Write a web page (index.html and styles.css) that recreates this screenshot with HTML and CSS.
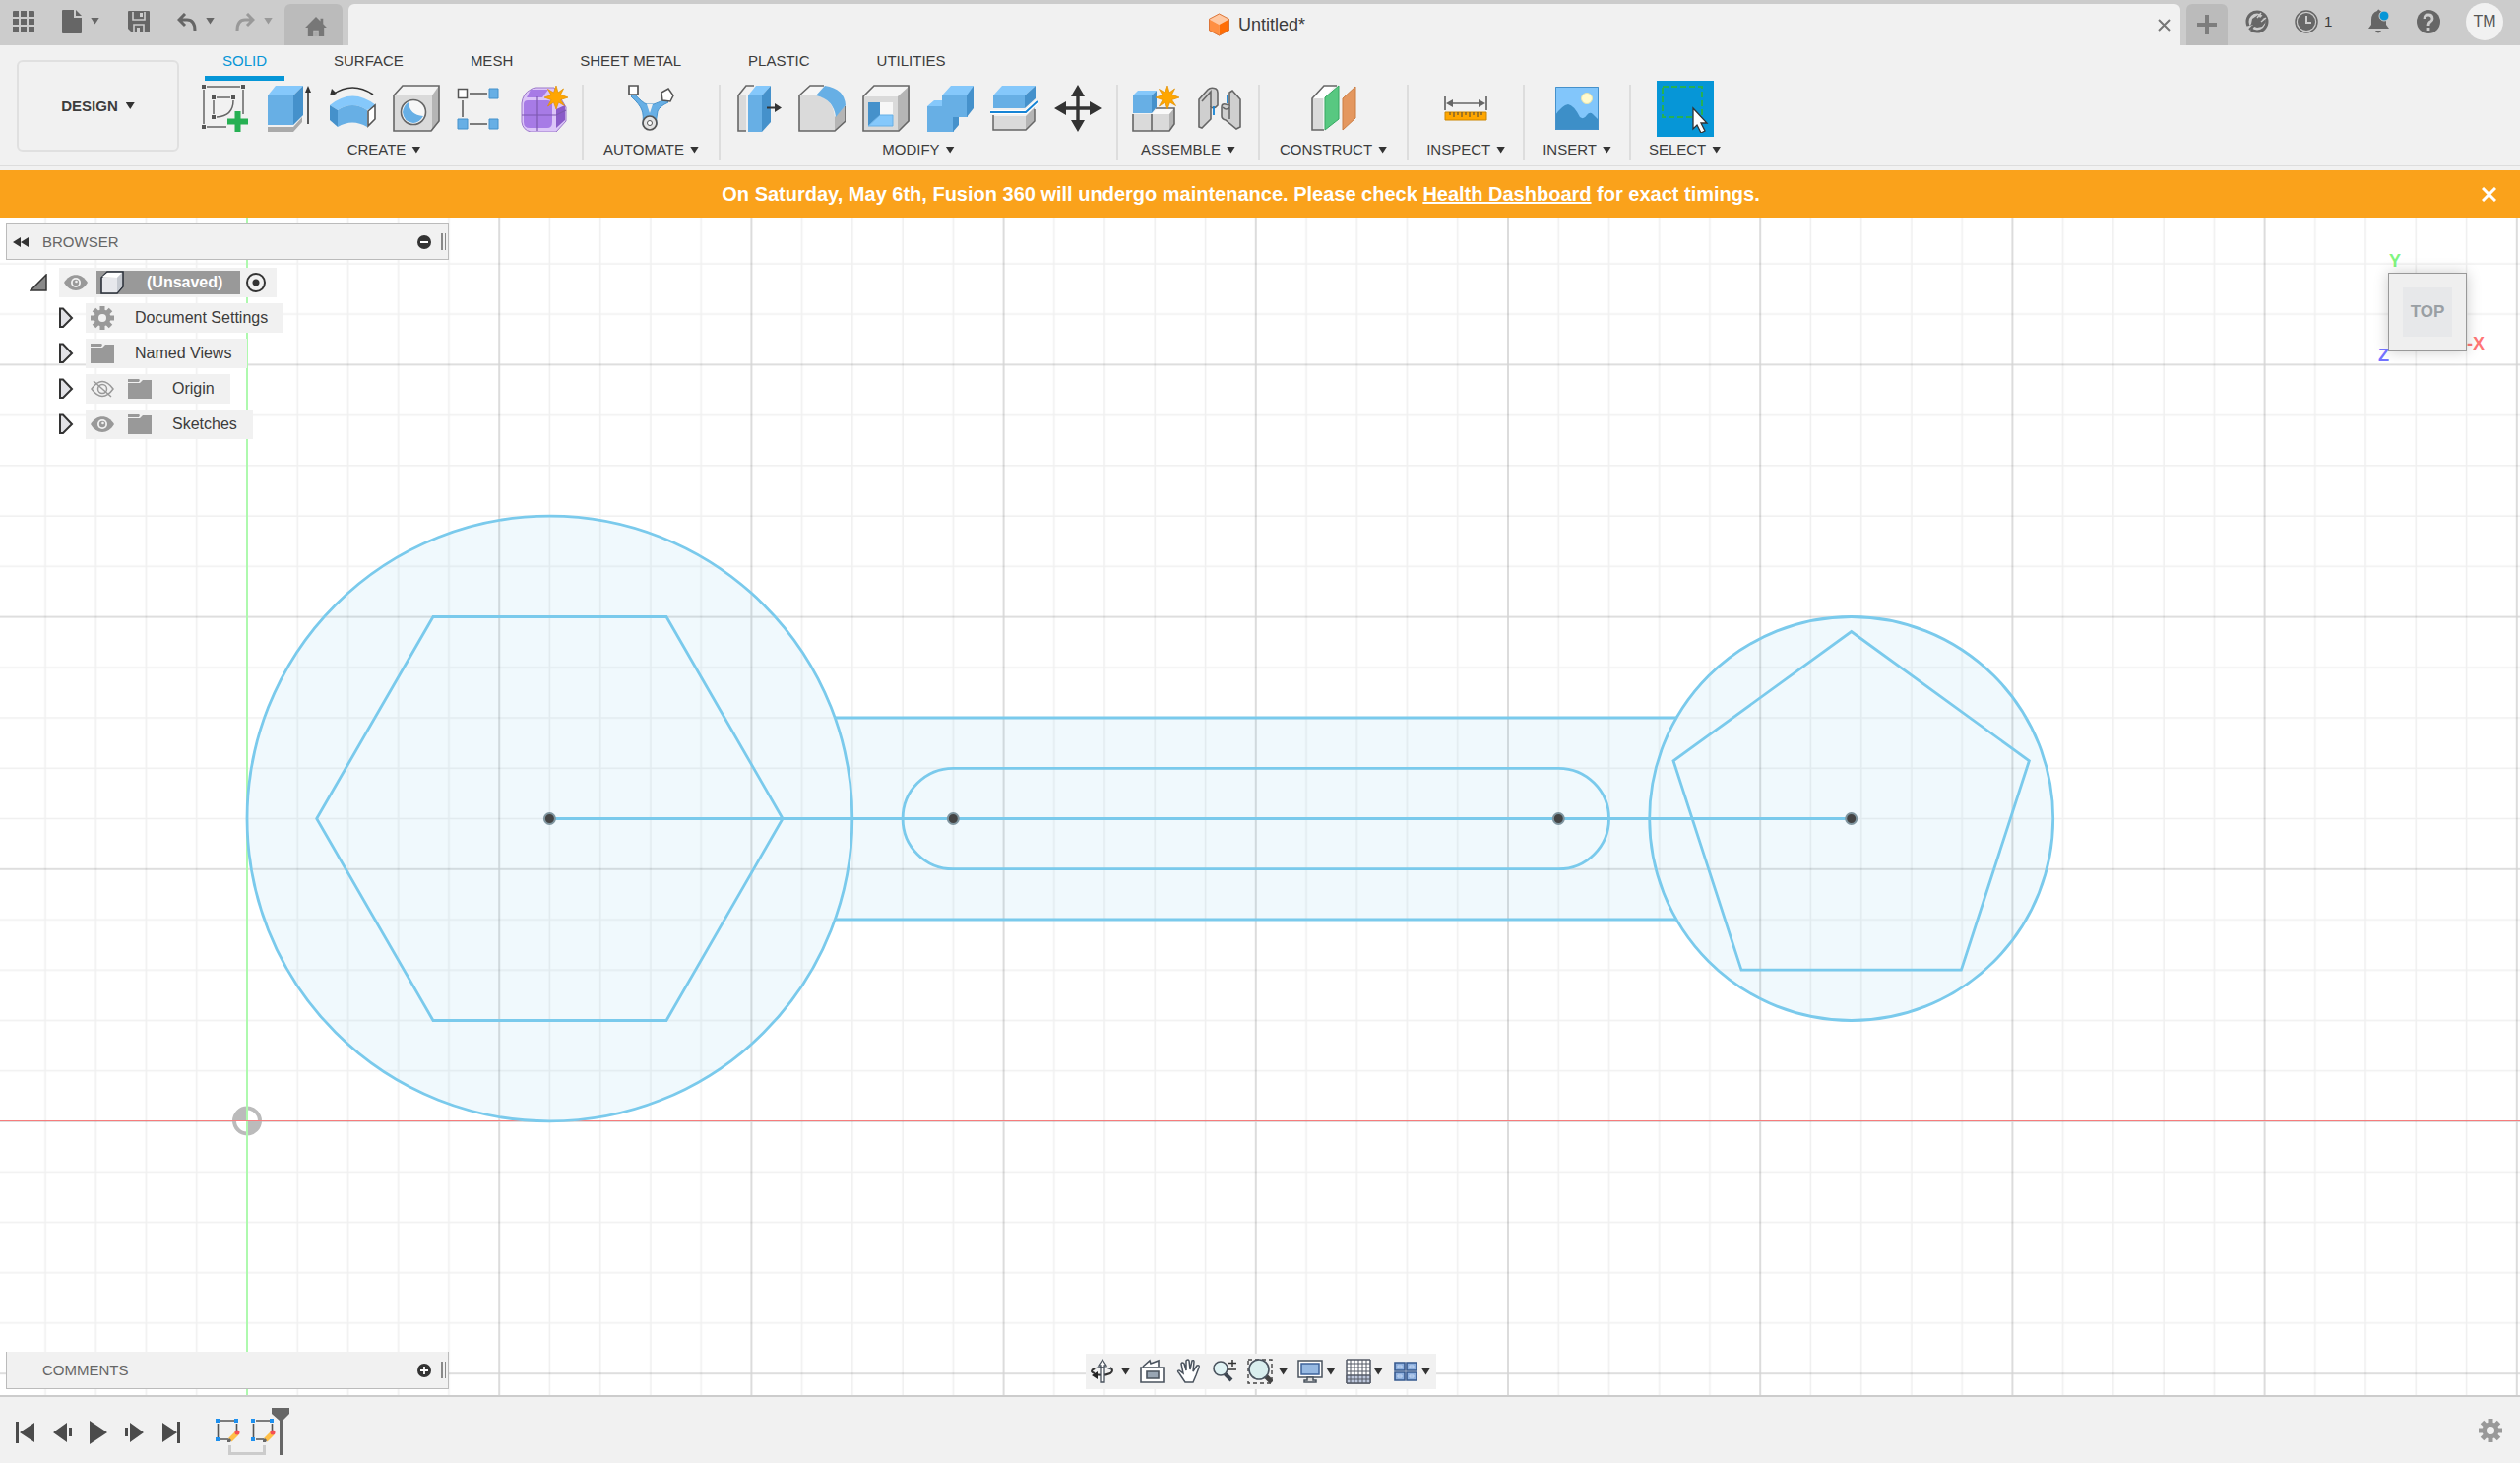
FILE: index.html
```html
<!DOCTYPE html>
<html lang="en">
<head>
<meta charset="utf-8">
<title>Untitled*</title>
<link rel="stylesheet" href="styles.css">
</head>
<body>
<svg class="defs" aria-hidden="true">
  <defs>
    <symbol id="star" viewBox="0 0 24 24"><path fill="#ffa600" stroke="#e08e00" stroke-width=".7" d="M12 0l2 7 5.500-4-3 6L24 12l-7.500 2.500 4 6-6-3.500L12 24l-2.500-7-6 4 3.500-6.500L0 12l7-2.500-3.500-6L9.500 7z"/></symbol>
    <symbol id="folder" viewBox="0 0 24 20"><path fill="#999" d="M0 4h12l3-3h9v19H0z"/><path fill="#999" d="M0 0h11l1 1-1 2H0z"/><path stroke="#f1f1f1" d="M0 3.500h11.500l3-3"  fill="none"/></symbol>
    <symbol id="eye" viewBox="0 0 24 16"><path fill="#999" d="M0 8C6-2.500 18-2.500 24 8 18 18.500 6 18.500 0 8z"/><circle cx="12" cy="8" r="5" fill="#f1f1f1"/><circle cx="12" cy="8" r="3.200" fill="#999"/><circle cx="12.500" cy="7" r="1.300" fill="#f1f1f1"/></symbol>
    <symbol id="gear" viewBox="0 0 24 24"><g fill="#999"><circle cx="12" cy="12" r="8.500"/><path d="M9.500 0h5v24h-5zM0 9.500h24v5H0z"/><path d="M9.500 0h5v24h-5zM0 9.500h24v5H0z" transform="rotate(45 12 12)"/></g><circle cx="12" cy="12" r="4" fill="#f1f1f1"/></symbol>
    <symbol id="expand" viewBox="0 0 16 22"><path d="M2 1.500h3L14 11l-9 9H2z" fill="#e2e2e6" stroke="#333" stroke-width="2"/></symbol>
    <symbol id="sketch" viewBox="0 0 26 26"><path d="M5 3h14M2.500 6v14M21.500 6v8M5 22h8" stroke="#555" stroke-width="1.600"/><g fill="#1e90ee"><path d="M0 1h4v4H0zM19 1h4v4h-4zM0 20h4v4H0z"/></g><path d="M13 21l7-7 3.500 3.500-7 7z" fill="#ffbf47"/><path d="M12 23l2-2 2 2-1 2h-3z" fill="#666"/><circle cx="22" cy="15" r="2.500" fill="#f44f55"/></symbol>
    <pattern id="grid" x="251" y="918" width="256.200" height="256.200" patternUnits="userSpaceOnUse">
      <path d="M51.240 0v257M102.480 0v257M153.720 0v257M204.960 0v257M0 51.240h257M0 102.480h257M0 153.720h257M0 204.960h257" stroke="#000" stroke-opacity=".06" stroke-width="1.500"/>
      <path d="M0 0h257M0 0v257M0 256.200h257M256.200 0v257" stroke="#000" stroke-opacity=".17" stroke-width="1.600"/>
    </pattern>
  </defs>
</svg>

<header class="titlebar">
  <div class="quick">
    <button class="tool apps" aria-label="Apps"><svg width="22" height="22" fill="#666"><path d="M0 1q0-1 1-1h5v6H0zM8 0h6v6H8zM16 0h5q1 0 1 1v5h-6zM0 8h6v6H0zM8 8h6v6H8zM16 8h6v6h-6zM0 16h6v6H1q-1 0-1-1zM8 16h6v6H8zM16 16h6v5q0 1-1 1h-5z"/></svg></button>
    <button class="tool file" aria-label="File"><svg width="20" height="24" fill="#666"><path d="M1 0h11v8h8v15q0 1-1 1H1q-1 0-1-1V1q0-1 1-1z"/><path d="M14 0l6 6h-6z"/></svg><i class="caret"></i></button>
    <button class="tool save" aria-label="Save"><svg width="22" height="22"><path fill="#666" d="M1 0h20q1 0 1 1v20q0 1-1 1H4l-4-4V1q0-1 1-1z"/><path d="M5 1v8h12V1M6 21v-7h10v7" fill="none" stroke="#ccc" stroke-width="1.600"/><path fill="#ccc" d="M12 2h3v4h-3zM9 17h3v4H9z"/></svg></button>
    <button class="tool undo" aria-label="Undo"><svg width="20" height="19" fill="none" stroke="#666" stroke-width="3"><path d="M8 1L2 7l6 6M2 7h8q8 0 8 11"/></svg><i class="caret"></i></button>
    <button class="tool redo" aria-label="Redo" disabled><svg width="20" height="19" fill="none" stroke="#999" stroke-width="3"><path d="M12 1l6 6-6 6M18 7h-8q-8 0-8 11"/></svg><i class="caret"></i></button>
  </div>
  <button class="home" aria-label="Home"><svg width="22" height="20" viewBox="0 0 24 22" fill="#777"><path d="M12 0l5 5V2h3v6l4 4h-3v10h-6v-7H9v7H3V12H0z"/><path d="M10 16h4v6h-4z" fill="#aaa"/></svg></button>
  <div class="doc">
    <div class="doc-name"><svg width="21" height="24" viewBox="0 0 22 24"><path d="M11 0l11 6-11 6L0 6z" fill="#ffc9a3"/><path d="M0 6l11 6v12L0 18z" fill="#ff8f42"/><path d="M22 6l-11 6v12l11-6z" fill="#ff6d05"/><path d="M11 .5L21.500 6v12L11 23.500.5 18V6z" fill="none" stroke="#d97338"/></svg><span>Untitled*</span></div>
    <button class="plain" aria-label="Close document"><svg width="13" height="13" stroke="#777" stroke-width="2"><path d="M1 1l11 11M12 1L1 12"/></svg></button>
  </div>
  <button class="newtab" aria-label="New tab"><svg width="20" height="20" stroke="#7d7d7d" stroke-width="4"><path d="M10 0v20M0 10h20"/></svg></button>
  <div class="status">
    <button class="plain" aria-label="Extensions"><svg width="24" height="24"><circle cx="12" cy="12" r="10" fill="none" stroke="#666" stroke-width="3"/><path fill="#666" d="M7 9l6-4 2 3 3-3 2 2-3 3 3-1 1 3-4 5-5 1-3-1-3 4-3-3 3-4z"/><path d="M16 3l-4 5M21 8l-5 4" stroke="#ccc" stroke-width="1.500"/><path d="M0 17l8-2-4 8z" fill="#ccc"/><path d="M4 20l4-4" stroke="#666" stroke-width="2"/></svg></button>
    <button class="plain jobs" aria-label="Job status"><svg width="24" height="24"><circle cx="12" cy="12" r="11" fill="none" stroke="#666" stroke-width="1.500"/><circle cx="12" cy="12" r="9" fill="#666"/><path d="M12 6v7h5" fill="none" stroke="#ccc" stroke-width="2"/></svg><span>1</span></button>
    <button class="plain" aria-label="Notifications"><svg width="24" height="26"><path fill="#666" d="M10 2q1-3 3 0 6 2 6 9v5l3 4H1l3-4v-5q0-7 6-9zM8 22h6q-3 5-6 0z"/><circle cx="17" cy="7" r="5" fill="#0696d7" stroke="#ccc"/></svg></button>
    <button class="plain" aria-label="Help"><svg width="24" height="24"><circle cx="12" cy="12" r="12" fill="#666"/><path d="M8 9q0-4 4-4t4 4q0 2-2 3t-2 4M12 18v3" fill="none" stroke="#ccc" stroke-width="2.800"/></svg></button>
    <button class="avatar">TM</button>
  </div>
</header>

<section class="ribbon">
  <button class="workspace">DESIGN <i class="caret"></i></button>
  <div class="ribbon-main">
    <nav class="tabs">
      <button class="tab active">SOLID</button><button class="tab">SURFACE</button><button class="tab">MESH</button><button class="tab">SHEET METAL</button><button class="tab">PLASTIC</button><button class="tab">UTILITIES</button>
    </nav>
    <div class="groups">
      <div class="group">
        <div class="icons">
          <button aria-label="Create sketch"><svg viewBox="0 0 48 48"><path d="M6 2h34M3 5v35M43 5v25M6 43h20M16 13h14M13 16v14M33 16q0 16-17 17" fill="none" stroke="#666" stroke-width="1.500"/><path fill="#555" d="M1 0h4v4H1zM41 0h4v4h-4zM1 41h4v4H1zM11 11h4v4h-4zM31 11h4v4h-4zM11 31h4v4h-4z"/><path fill="#26b053" d="M34.500 27h6v7.500H48v6h-7.500V48h-6v-7.500H27v-6h7.500z"/></svg></button>
          <button aria-label="Extrude"><svg viewBox="0 0 48 48"><path d="M3 43h26l9-10v5l-9 10H3z" fill="#aaa"/><path d="M3 11h26v30H3z" fill="#67afe5"/><path d="M3 11L11 1h28L29 11z" fill="#85c8fb"/><path d="M39 1v30L29 41V11z" fill="#4591cb"/><path d="M44 40V6" stroke="#333" stroke-width="1.600"/><path d="M41 8l3-7 3 7z" fill="#333"/></svg></button>
          <button aria-label="Revolve"><svg viewBox="0 0 48 48"><path d="M4 10Q24-4 45 10" fill="none" stroke="#333" stroke-width="1.700"/><path d="M1 11l2-7 5 5z" fill="#333"/><path d="M1 21q23-19 47 0l-9 5q-15-10-30 0z" fill="#85c8fb"/><path d="M9 26q15-10 30 0v17q-15-9-30 0z" fill="#67afe5"/><path d="M1 21l8 5v17l-8-7z" fill="#4591cb"/><path d="M40 27l7-6v14l-7 7z" fill="#fff" stroke="#555" stroke-width="1.600"/></svg></button>
          <button aria-label="Hole"><svg viewBox="0 0 48 48"><path d="M1 11h39v36H1z" fill="#dadada"/><path d="M1 11l9-10h37l-7 10z" fill="#f4f4f4"/><path d="M40 11l7-10v36l-7 10z" fill="#b5b5b5"/><path d="M1 11l9-10h37v36l-8 10H1z" fill="none" stroke="#666" stroke-width="1.600"/><circle cx="21" cy="28" r="12.500" fill="#f7f7f7" stroke="#666" stroke-width="1.600"/><path d="M16 18q1 13 15 14-4 7-10 7-10-1-11-11 1-7 6-10z" fill="#67afe5"/></svg></button>
          <button aria-label="Pattern"><svg viewBox="0 0 48 48"><path d="M13 9h18M6 16v17M13 40h18" stroke="#555" stroke-width="1.500"/><path d="M1.500 4.500h9v9h-9z" fill="#fff" stroke="#555" stroke-width="1.500"/><g fill="#67afe5" stroke="#4591cb"><path d="M33 4h9v10h-9zM1 35h10v10H1zM33 35h9v10h-9z"/></g></svg></button>
          <button aria-label="Create form"><svg viewBox="0 0 48 48"><path d="M10 5q2-2 6-2h18l12 20v14l-10 11H10q-8-2-9-10V19Q2 9 10 5z" fill="#dcc5f8" stroke="#9a77c9"/><path d="M10 5h18l-6 8H6zM3 20q0-4 4-4h20q5 0 5 5v17q0 6-5 6H9q-6 0-6-6z" fill="#a77be6"/><path d="M36 25l9-4v15l-9 8z" fill="#8a5bc8"/><path d="M17 12v35M1 31h35l10-5" fill="none" stroke="#7d59af" stroke-width="1.200"/><use href="#star" x="24" y="1" width="24" height="24"/></svg></button>
        </div>
        <button class="label">CREATE <i class="caret"></i></button>
      </div>
      <div class="group">
        <div class="icons">
          <button aria-label="Automated modeling"><svg viewBox="0 0 48 48"><path d="M7 9q9 10 13 11h7q7-2 11-6l4 4q-9 4-11 9-2 9-1 14H16q1-10-1-15Q13 20 4 12z" fill="#67afe5" stroke="#4591cb"/><path d="M20 20h6l-3 9z" fill="#f1f1f1"/><path d="M2 1h9v9H2z" fill="#fff" stroke="#555" stroke-width="1.700"/><path d="M42 4l5 7-3 6-8-1-1-8z" fill="#fff" stroke="#555" stroke-width="1.500"/><circle cx="23" cy="39" r="7" fill="#e4e4e4" stroke="#555" stroke-width="1.700"/><circle cx="23" cy="39" r="2.500" fill="#fff" stroke="#555"/></svg></button>
        </div>
        <button class="label">AUTOMATE <i class="caret"></i></button>
      </div>
      <div class="group">
        <div class="icons">
          <button aria-label="Press pull"><svg viewBox="0 0 48 48"><path d="M4 11h8v36H4z" fill="#dadada"/><path d="M20 1h-8L4 11v36h8" fill="none" stroke="#666" stroke-width="1.600"/><path d="M14 11h14v37H14z" fill="#67afe5"/><path d="M14 11l8-10h15l-9 10z" fill="#85c8fb"/><path d="M37 1v37L28 48V11z" fill="#4591cb"/><path d="M33 23.500h9" stroke="#333" stroke-width="2"/><path d="M41 19l7 4.500-7 4.500z" fill="#333"/></svg></button>
          <button aria-label="Fillet"><svg viewBox="0 0 48 48"><path d="M1 11h16q18 2 20 22v14H1z" fill="#dadada"/><path d="M1 11L12 1h14l-8 10z" fill="#f6f6f6"/><path d="M37 33l11-12v16L37 47z" fill="#b5b5b5"/><path d="M26 1H12L1 11v36h36l11-10V22" fill="none" stroke="#666" stroke-width="1.600"/><path d="M18 11l9-10q20 3 21 20L38 33Q36 15 18 11z" fill="#67afe5"/></svg></button>
          <button aria-label="Shell"><svg viewBox="0 0 48 48"><path d="M1 12h35v35H1z" fill="#dadada"/><path d="M1 12L12 1h36L36 12z" fill="#f5f5f5"/><path d="M48 1v36L36 47V12z" fill="#b5b5b5"/><path d="M1 12L12 1h35v36L37 47H1z" fill="none" stroke="#666" stroke-width="1.600"/><path d="M6 18h25v24H6z" fill="#f7f7f7"/><path d="M6 18h12v13L6 42z" fill="#4591cb"/><path d="M18 31h13v11H6z" fill="#85c8fb" stroke="#67afe5"/></svg></button>
          <button aria-label="Combine"><svg viewBox="0 0 48 48"><path d="M1 22h15V11h26v22H28v15H1z" fill="#67afe5"/><path d="M1 22l7-6h8v6zM16 11L25 1h23l-6 10z" fill="#85c8fb"/><path d="M48 1v23l-7 9V11zM33 33v8l-6 7V33z" fill="#4591cb"/></svg></button>
          <button aria-label="Split body"><svg viewBox="0 0 48 48"><path d="M3 11h32v13H3z" fill="#67afe5"/><path d="M3 11L12 1h34L35 11z" fill="#85c8fb"/><path d="M46 1v13L35 24V11z" fill="#4591cb"/><path d="M3 32h33v14H3z" fill="#dadada"/><path d="M36 32l9-9v14l-9 9z" fill="#b5b5b5"/><path d="M3 31v15h33l9-9V25" fill="none" stroke="#666" stroke-width="1.500"/><path d="M0 28h36l12-11" fill="none" stroke="#fff" stroke-width="4"/><path d="M0 28h36l12-11" fill="none" stroke="#1684d5" stroke-width="2"/></svg></button>
          <button aria-label="Move"><svg viewBox="0 0 48 48"><path d="M24 8v32M8 24h32" stroke="#333" stroke-width="3.400"/><path fill="#333" d="M24 0l7 12H17zM24 48l7-12H17zM0 24l12-7v14zM48 24l-12-7v14z"/></svg></button>
        </div>
        <button class="label">MODIFY <i class="caret"></i></button>
      </div>
      <div class="group">
        <div class="icons">
          <button aria-label="New component"><svg viewBox="0 0 48 48"><path d="M1 30h37v17H1z" fill="#dadada"/><path d="M20 30l6-6h17l-5 6z" fill="#fafafa"/><path d="M43 24v16l-5 7V30z" fill="#b5b5b5"/><path d="M1 30v17h37l5-7V24H24M20 30v17" fill="none" stroke="#666" stroke-width="1.600"/><path d="M1 11h19v18H1z" fill="#67afe5"/><path d="M1 11l5-5h19l-5 5z" fill="#85c8fb"/><path d="M25 6v17l-5 6V11z" fill="#4591cb"/><use href="#star" x="24" y="1" width="24" height="24"/></svg></button>
          <button aria-label="Joint"><svg viewBox="0 0 48 48"><g stroke="#666" stroke-width="1.600"><path d="M3 15l9-10q3-3 8-1 2 1 2 4v13q-3 4-7 2v12l-9 9-3-1z" fill="#cfcfcf"/><path d="M6 17l9-10v16" fill="none"/><path d="M45 15l-8-9-3 2v13l-4-1q-4-1-4 3v9q0 3 4 4l11 9 4-2z" fill="#cfcfcf"/><path d="M27 23q4 4 7 0v12" fill="none"/></g><path d="M18 22v9M32 10v9" stroke="#1684d5" stroke-width="1.800"/></svg></button>
        </div>
        <button class="label">ASSEMBLE <i class="caret"></i></button>
      </div>
      <div class="group">
        <div class="icons">
          <button aria-label="Construction plane"><svg viewBox="0 0 48 48"><path d="M2 14h11v32H2z" fill="#dadada"/><path d="M2 14L14 1h11L14 14z" fill="#fff"/><path d="M27 1H14L2 14v32h12" fill="none" stroke="#666" stroke-width="1.600"/><path d="M15 13L29 1v34L15 46z" fill="#58c881" stroke="#35a961"/><path d="M33 14L46 2v32L33 46z" fill="#e4975f" stroke="#cb7d42"/></svg></button>
        </div>
        <button class="label">CONSTRUCT <i class="caret"></i></button>
      </div>
      <div class="group tight">
        <div class="icons">
          <button aria-label="Measure"><svg viewBox="0 0 48 48"><path d="M3 12v14M45 12v14M6 19h36" stroke="#666" stroke-width="1.700"/><path d="M4 19l7-4v8zM44 19l-7-4v8z" fill="#666"/><path d="M3 28h42v8H3z" fill="#ffa600" stroke="#cb8500"/><path d="M8 28v3M12 28v5M16 28v3M20 28v5M24 28v3M28 28v5M32 28v3M36 28v5M40 28v3" stroke="#444"/></svg></button>
        </div>
        <button class="label">INSPECT <i class="caret"></i></button>
      </div>
      <div class="group tight">
        <div class="icons">
          <button aria-label="Insert canvas"><svg viewBox="0 0 48 48"><path d="M2 2h44v44H2z" fill="#82c6fb"/><path d="M2 31q7-10 13-11 6 1 12 13 4 3 7-2 3-4 6-1 3 3 6 6v10H2z" fill="#3d8fc8"/><path d="M2.500 2.500h43v43h-43z" fill="none" stroke="#4591cb"/><circle cx="34" cy="14" r="5.500" fill="#fffbcf" stroke="#e9e5ad"/></svg></button>
        </div>
        <button class="label">INSERT <i class="caret"></i></button>
      </div>
      <div class="group tight">
        <div class="icons">
          <button class="selected" aria-label="Select"><svg viewBox="0 0 48 48"><path d="M1 1h40v31H1z" fill="none" stroke="#26b053" stroke-width="2" stroke-dasharray="6 3"/><path d="M32 23v21l4-4 4 8 4-2-4-8h6z" fill="#fff" stroke="#333" stroke-width="1.300"/></svg></button>
        </div>
        <button class="label">SELECT <i class="caret"></i></button>
      </div>
    </div>
  </div>
</section>

<section class="banner">
  <p>On Saturday, May 6th, Fusion 360 will undergo maintenance. Please check <a href="#">Health Dashboard</a> for exact timings.</p>
  <button class="plain dismiss" aria-label="Dismiss"><svg width="15" height="15" stroke="#fff" stroke-width="3"><path d="M1 1l13 13M14 1L1 14"/></svg></button>
</section>

<main class="viewport">
  <svg class="canvas" aria-label="Sketch canvas">
    <rect width="100%" height="100%" fill="url(#grid)"/>
    <rect x="250" width="2" height="100%" fill="#aef9ae"/>
    <rect y="917" width="100%" height="1" fill="#f67c7c"/>
    <g fill="#58b8ee" fill-opacity=".09">
      <path d="M558.400 303.500a307.400 307.400 0 1 0 .1 0zM848.200 508H1703a205 205 0 0 0 0 205H848.200a307.400 307.400 0 0 0 0-205z"/>
      <circle cx="1880.700" cy="610.500" r="205"/>
    </g>
    <g fill="none" stroke="#7acaec" stroke-width="2.800">
      <circle cx="558.400" cy="610.500" r="307.400"/>
      <circle cx="1880.700" cy="610.500" r="205"/>
      <path d="M321.700 610.500l118.300-205h237l118.100 205L677 815.500H440zM848.200 508H1703M848.200 713H1703M558 610.500h1322M968.300 559.300h615a51.200 51.200 0 0 1 0 102.400h-615a51.200 51.200 0 0 1 0-102.400zM1880.700 420.500l180.700 131.300-69 212.400h-223.400l-69-212.400z"/>
    </g>
    <g fill="#444" stroke="#7f959f" stroke-width="2"><circle cx="558.400" cy="610.500" r="5.500"/><circle cx="968.300" cy="610.500" r="5.500"/><circle cx="1583.300" cy="610.500" r="5.500"/><circle cx="1880.700" cy="610.500" r="5.500"/></g>
    <circle cx="251" cy="917.500" r="13" fill="#fff" stroke="#bbb" stroke-width="4"/>
    <path d="M251 917.500v-13a13 13 0 0 0-13 13zM251 917.500v13a13 13 0 0 0 13-13z" fill="#bbb"/>
    <path d="M251 902v31" stroke="#aef9ae" stroke-width="2"/>
    <path d="M236 917.500h30" stroke="#f67c7c"/>
  </svg>

  <aside class="browser">
    <div class="panel-head">
      <button class="plain collapse" aria-label="Collapse"><svg width="16" height="10" fill="#333"><path d="M8 0v10L0 5zM16 0v10L8 5z"/></svg></button>
      <span>BROWSER</span>
      <button class="plain" aria-label="Minimize"><svg width="14" height="14"><circle cx="7" cy="7" r="7" fill="#333"/><path d="M3 7h8" stroke="#fff" stroke-width="2"/></svg></button>
      <i class="grip"></i>
    </div>
    <ul class="tree">
      <li class="root">
        <svg width="18" height="18"><path d="M17 1v16H1z" fill="#888" stroke="#333" stroke-width="1.500"/></svg>
        <div class="node"><svg width="24" height="16"><use href="#eye"/></svg>
          <span class="picked"><svg width="24" height="24"><path d="M1 7l6-6h16v15l-6 7H1z" fill="#ddd" stroke="#2d333d" stroke-width="1.600"/><path d="M2 7h15v15H2z" fill="#e7e8ec"/><path d="M2 6l5-4h15l-5 5z" fill="#fff"/><path d="M22 2v14l-5 6V7z" fill="#c6cad1"/></svg><b>(Unsaved)</b></span>
          <label class="activate"><input type="radio" name="component" checked aria-label="Activate component"></label></div>
      </li>
      <li><svg width="16" height="22"><use href="#expand"/></svg><div class="node"><svg width="24" height="24"><use href="#gear"/></svg><span>Document Settings</span></div></li>
      <li><svg width="16" height="22"><use href="#expand"/></svg><div class="node"><svg width="24" height="20"><use href="#folder"/></svg><span>Named Views</span></div></li>
      <li><svg width="16" height="22"><use href="#expand"/></svg><div class="node"><svg width="24" height="18" fill="none" stroke="#999" stroke-width="1.500"><path d="M1 9q11-15 22 0-11 15-22 0zM3 1l18 16"/><circle cx="12" cy="9" r="4.500"/></svg><svg width="24" height="20"><use href="#folder"/></svg><span>Origin</span></div></li>
      <li><svg width="16" height="22"><use href="#expand"/></svg><div class="node"><svg width="24" height="16"><use href="#eye"/></svg><svg width="24" height="20"><use href="#folder"/></svg><span>Sketches</span></div></li>
    </ul>
  </aside>

  <div class="viewcube"><span class="axis y">Y</span><span class="axis x">-X</span><button class="face"><span>TOP</span></button><span class="axis z">Z</span></div>

  <div class="comments panel-head">
    <span>COMMENTS</span>
    <button class="plain" aria-label="Expand comments"><svg width="14" height="14"><circle cx="7" cy="7" r="7" fill="#333"/><path d="M3 7h8M7 3v8" stroke="#fff" stroke-width="1.800"/></svg></button>
    <i class="grip"></i>
  </div>

  <div class="navbar">
    <button class="plain orbit" aria-label="Orbit"><svg width="26" height="26"><path d="M21 9q4 3 0 6-7 3-16 1M5 10q-6 3 0 5" fill="none" stroke="#333" stroke-width="2"/><path d="M11 24V7H9l4-6 4 6h-2v17zM5 10q8-3 17 1" fill="#fff" stroke="#4a535e" stroke-width="1.300"/><path d="M2 17l6-4v8z" fill="#222"/></svg><i class="caret"></i></button>
    <button class="plain look" aria-label="Look at"><svg width="26" height="26" fill="#fff" stroke="#4a535e" stroke-width="1.600"><path d="M3 8l7-6 1 3 8-3v6M1 9h23v15H1z"/><path d="M7 13h12v7H7z" fill="#98a5b3"/></svg></button>
    <button class="plain pan" aria-label="Pan"><svg width="26" height="26" fill="#fff" stroke="#4a535e" stroke-width="1.500"><path d="M9 24L3 15q-3-3 0-3l4 3L5 5q1-2 3 0l2 7V2q2-2 3 0l1 9 2-9q2-1 2 1l-1 10 4-6q3-1 2 2l-3 8-3 7z"/></svg></button>
    <button class="plain zoomi" aria-label="Zoom"><svg width="26" height="26"><path d="M13 15l7 7" stroke="#3d4650" stroke-width="4"/><circle cx="9" cy="10" r="7" fill="#dff2f3" stroke="#4a535e" stroke-width="1.600"/><path d="M21 1v7M17 4.500h8M17 11h8" stroke="#333" stroke-width="1.500"/></svg></button>
    <button class="plain fit" aria-label="Fit"><svg width="26" height="26"><path d="M1 1h24v24H1z" fill="none" stroke="#444" stroke-width="1.400" stroke-dasharray="4 3"/><path d="M18 17l7 7" stroke="#444" stroke-width="5"/><circle cx="12" cy="11" r="10" fill="#d9eeee" stroke="#4a535e" stroke-width="1.600"/></svg><i class="caret"></i></button>
    <button class="plain" aria-label="Display settings"><svg width="26" height="26" stroke="#4a535e" stroke-width="1.500"><path d="M1 2h24v17H1z" fill="#fff"/><path d="M4 5h18v11H4z" fill="#96b9e3" stroke="#3e639b"/><path d="M10 19h6v3h3v2H7v-2h3z" fill="#ddd"/></svg><i class="caret"></i></button>
    <button class="plain" aria-label="Grid and snaps"><svg width="26" height="26" fill="none" stroke="#555b66"><path d="M1 1h24v24H1z" fill="#fff"/><path d="M1 17h24v8H1z" fill="#bdc7dc"/><path d="M1 1h24v24H1zM5 1v24M9 1v24M13 1v24M17 1v24M21 1v24M1 5h24M1 9h24M1 13h24M1 17h24M1 21h24"/></svg><i class="caret"></i></button>
    <button class="plain" aria-label="Viewports"><svg width="26" height="22" fill="#8eb0df" stroke="#36598e" stroke-width="1.600"><path d="M2 2h10v8H2zM14 2h10v8H14zM2 12h10v8H2zM14 12h10v8H14z"/><path d="M5 5h4v2H5zM17 5h4v2h-4zM5 15h4v2H5zM17 15h4v2h-4z" stroke="#c1d5ef" stroke-width="1"/></svg><i class="caret"></i></button>
  </div>
</main>

<footer class="timeline">
  <div class="playback">
    <button class="plain" aria-label="Go to start"><svg width="20" height="22"><path fill="#4b4b4b" d="M0 0h3v22H0zM19 1v20L4 11z"/></svg></button>
    <button class="plain" aria-label="Step back"><svg width="20" height="22"><path fill="#4b4b4b" d="M17 6h3v9h-3zM15 1v20L1 11z"/></svg></button>
    <button class="plain" aria-label="Play"><svg width="20" height="24"><path fill="#4b4b4b" d="M1 0v24l18-12z"/></svg></button>
    <button class="plain" aria-label="Step forward"><svg width="20" height="22"><path fill="#4b4b4b" d="M0 6h3v9H0zM5 1v20l14-10z"/></svg></button>
    <button class="plain" aria-label="Go to end"><svg width="20" height="22"><path fill="#4b4b4b" d="M16 0h3v22h-3zM1 1v20l15-10z"/></svg></button>
  </div>
  <div class="history">
    <button class="plain" aria-label="Sketch 1"><svg width="26" height="26"><use href="#sketch"/></svg></button>
    <button class="plain" aria-label="Sketch 2"><svg width="26" height="26"><use href="#sketch"/></svg></button>
    <i class="bracket"></i>
    <svg class="marker" width="20" height="50" fill="#666"><path d="M1 1h18v6l-7 7v35H9V14L1 7z"/></svg>
  </div>
  <button class="plain prefs" aria-label="Timeline settings"><svg width="24" height="24"><use href="#gear"/></svg></button>
</footer>
</body>
</html>
```
FILE: styles.css
```css
* { box-sizing: border-box; }
body {
  margin: 0;
  min-height: 100vh;
  display: flex;
  flex-direction: column;
  background: #f1f1f1;
  color: #3c3c3c;
  font: 15px/20px "Liberation Sans", Arial, sans-serif;
}
button {
  margin: 0;
  padding: 0;
  border: 0;
  background: none;
  color: inherit;
  font: inherit;
}
svg { display: block; flex: none; }
.defs { position: absolute; width: 0; height: 0; }
.plain { display: flex; align-items: center; }
.caret {
  flex: none;
  width: 9px;
  height: 7px;
  background: #333;
  clip-path: polygon(0 0, 100% 0, 50% 100%);
}

/* Title bar */
.titlebar {
  display: flex;
  height: 46px;
  padding-top: 4px;
  background: #ccc;
}
.quick { display: flex; width: 289px; padding-left: 13px; }
.tool { display: flex; align-items: center; gap: 9px; height: 36px; }
.tool .caret { background: #666; margin-top: -2px; }
.file { margin-left: 28px; }
.save { margin-left: 29px; }
.undo { margin-left: 28px; }
.redo { margin-left: 21px; }
.redo .caret { background: #999; }
.home {
  display: grid;
  place-items: center;
  width: 59px;
  margin-right: 6px;
  padding: 4px 0 0 4px;
  border-radius: 6px 6px 0 0;
  background: #bbb;
}
.doc {
  flex: 1;
  display: flex;
  align-items: center;
  padding: 0 10px 0 8px;
  border-radius: 6px 6px 0 0;
  background: #f1f1f1;
}
.doc-name {
  flex: 1;
  display: flex;
  align-items: center;
  justify-content: center;
  gap: 9px;
  font-size: 18px;
}
.newtab {
  display: grid;
  place-items: center;
  width: 42px;
  margin-left: 6px;
  border-radius: 6px 6px 0 0;
  background: #bbb;
}
.status {
  display: flex;
  align-items: center;
  gap: 26px;
  height: 36px;
  padding: 0 17px 0 18px;
}
.jobs { gap: 6px; width: 48px; }
.avatar {
  width: 38px;
  height: 38px;
  border-radius: 50%;
  background: #f1f1f1;
  color: #555;
  font-size: 16px;
}

/* Ribbon */
.ribbon {
  display: flex;
  height: 123px;
  border-bottom: 1px solid #ddd;
}
.workspace {
  display: flex;
  align-items: center;
  justify-content: center;
  gap: 8px;
  width: 165px;
  height: 93px;
  margin: 15px 7px 0 17px;
  border: 2px solid #e0e0e0;
  border-radius: 6px;
  font-weight: bold;
}
.tabs { display: flex; gap: 32px; padding-left: 19px; }
.tab { height: 36px; padding: 0 18px; border-bottom: 5px solid transparent; }
.active { color: #0696d7; border-color: #0696d7; }
.groups { display: flex; }
.group {
  display: flex;
  flex-direction: column;
  align-items: center;
  height: 77px;
  margin-top: 4px;
  padding: 0 6px;
  border-right: 2px solid #ddd;
}
.group:last-child { border: 0; }
.icons { display: flex; height: 48px; }
.icons button { display: grid; place-items: center; width: 65px; height: 48px; }
.icons svg { width: 48px; height: 48px; }
.icons .selected { width: 58px; height: 57px; margin-top: -4px; background: #0696d7; }
.label { display: flex; align-items: center; gap: 6px; height: 20px; margin-top: 8px; padding: 0 14px; }
.selected { position: relative; }
.tight .label { padding: 0 12px; }

/* Notice */
.banner {
  display: flex;
  align-items: center;
  height: 48px;
  margin-top: 4px;
  padding-right: 24px;
  background: #faa21b;
  color: #fff;
}
.banner p { flex: 1; margin: 0; text-align: center; font-size: 20px; font-weight: bold; }
.banner a { color: inherit; }

/* Modelling viewport */
.viewport {
  position: relative;
  flex: 1;
  display: flex;
  background: #fff;
  overflow: hidden;
}
.canvas { position: absolute; inset: 0; width: 100%; height: 100%; }
.browser { position: absolute; left: 6px; top: 6px; width: 450px; }
.panel-head {
  display: flex;
  align-items: center;
  width: 450px;
  height: 37px;
  padding: 0 2px 0 36px;
  border: 1px solid #bbb;
  background: #f1f1f1;
  color: #666;
}
.panel-head span { flex: 1; }
.collapse { width: 30px; margin-left: -30px; }
.grip { width: 5px; height: 17px; margin-left: 10px; border: solid #888; border-width: 0 1px 0 2px; }
.tree { margin: 8px 0 0; padding: 0; list-style: none; font-size: 16px; }
.tree li { display: flex; align-items: center; gap: 12px; height: 30px; margin-bottom: 6px; padding-left: 53px; }
.tree .root { padding-left: 24px; }
.node {
  display: flex;
  align-items: center;
  gap: 14px;
  height: 30px;
  padding: 0 16px 0 5px;
  background: #f1f1f1;
}
.node span { margin-left: 7px; }
.root .node { gap: 6px; padding-right: 11px; }
.node .picked {
  display: flex;
  align-items: center;
  gap: 23px;
  height: 24px;
  margin: 0 0 0 3px;
  padding: 0 18px 0 4px;
  background: #999;
  color: #fff;
}
.activate { display: flex; }
.activate input {
  appearance: none;
  width: 20px;
  height: 20px;
  margin: 0;
  border: 2px solid #333;
  border-radius: 50%;
  background: radial-gradient(circle, #333 3px, #f1f1f1 4px);
}
.viewcube { position: absolute; right: 54px; top: 56px; width: 80px; height: 80px; }
.face {
  position: relative;
  display: grid;
  place-items: center;
  width: 80px;
  height: 80px;
  border: 1px solid #999;
  background: #efefef;
  box-shadow: 0 0 14px #0003;
}
.face span {
  width: 50px;
  height: 50px;
  background: #e7e8ea;
  color: #999fa4;
  font-size: 17px;
  font-weight: bold;
  line-height: 50px;
}
.axis { position: absolute; font-size: 18px; font-weight: bold; }
.y { left: 1px; top: -22px; color: #80f580; }
.x { right: -18px; top: 62px; color: #ff7676; }
.z { left: -10px; bottom: -14px; color: #7272ff; }
.comments { position: absolute; left: 6px; bottom: 6px; height: 38px; border-top: 0; }
.navbar {
  position: absolute;
  left: 50%;
  bottom: 6px;
  display: flex;
  align-items: center;
  justify-content: space-between;
  width: 356px;
  height: 36px;
  margin-left: -177px;
  padding: 0 6px 0 4px;
  background: #f1f1f1;
}
.navbar .plain { gap: 3px; }
.navbar .orbit, .navbar .fit { gap: 6px; }

/* Timeline */
.timeline {
  display: flex;
  align-items: center;
  height: 69px;
  padding: 0 18px 0 16px;
  border-top: 2px solid #ccc;
}
.playback { display: flex; align-items: center; gap: 17px; width: 203px; padding-top: 4px; }
.history { position: relative; display: flex; gap: 10px; flex: 1; }
.bracket {
  position: absolute;
  left: 13px;
  top: 28px;
  width: 38px;
  height: 10px;
  border: 3px solid #ccc;
  border-top: 0;
}
.marker { position: absolute; left: 56px; top: -11px; }
```
